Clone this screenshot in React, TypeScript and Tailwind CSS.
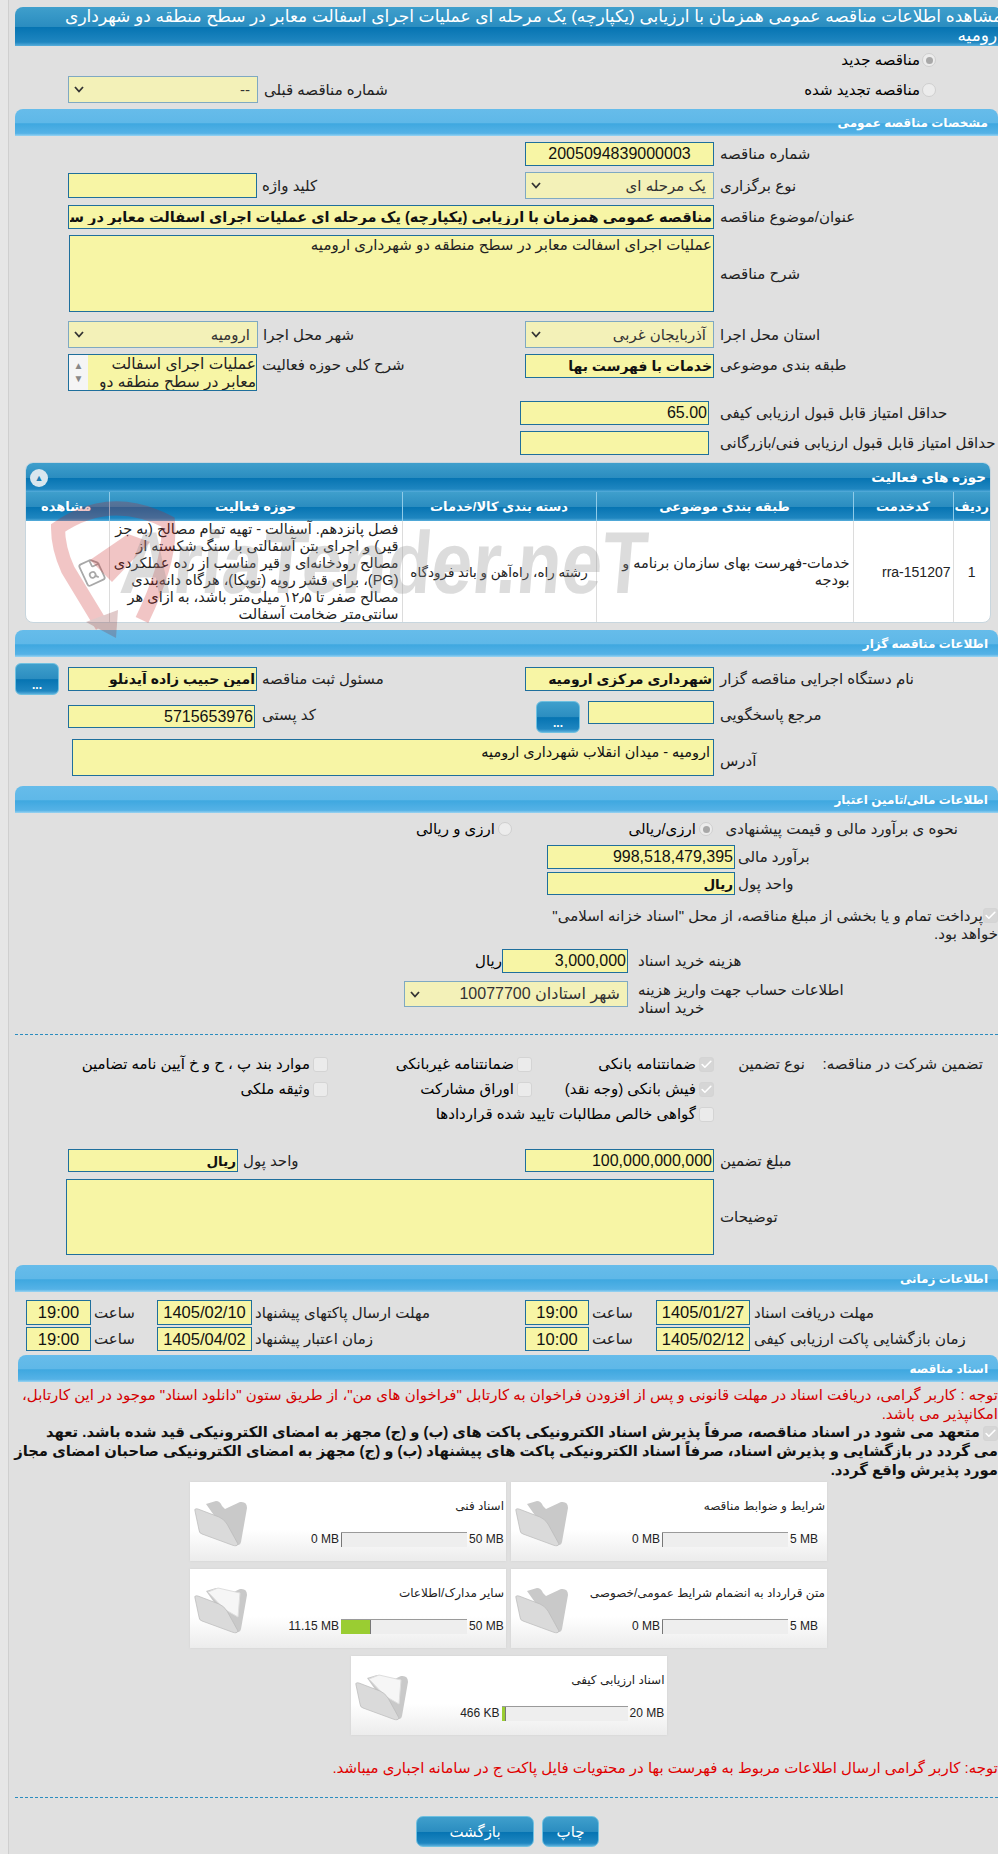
import { Check, FileSearch } from "lucide-react";
import type { ReactNode } from "react";

const darkBar =
  "bg-[linear-gradient(180deg,#3f9fcc_0%,#2b8dc0_50%,#0674b2_52%,#1f86c0_90%,#58aedb_100%)]";

function Section({ title, className = "" }: { title: string; className?: string }) {
  return (
    <div
      className={`flex h-[27px] items-center rounded-t-[8px] bg-[linear-gradient(180deg,#66bcea_0%,#5fb8e8_50%,#3fa8e0_55%,#55b2e6_90%,#9ad4f2_100%)] pr-[10px] text-[12px] font-bold text-white ${className}`}
    >
      {title}
    </div>
  );
}

function Label({ children, className = "" }: { children: ReactNode; className?: string }) {
  return <div className={`shrink-0 text-left text-[#222] ${className}`}>{children}</div>;
}

function Field({
  value = "",
  className = "",
  align = "text-right",
}: {
  value?: string;
  className?: string;
  align?: string;
}) {
  return (
    <input
      readOnly
      value={value}
      className={`shrink-0 border border-[#1f6f9c] bg-[#f7f5a5] px-[1px] text-[#111] outline-none ${align} ${className}`}
    />
  );
}

function Select({ value, className = "" }: { value: string; className?: string }) {
  return (
    <div
      className={`flex shrink-0 items-center justify-between border border-[#7fa9c2] bg-[#f3f1b8] pl-[5px] pr-[7px] text-[#333] ${className}`}
    >
      <span>{value}</span>
      <svg width="10" height="7" viewBox="0 0 10 7">
        <path d="M1 1 L5 5.5 L9 1" fill="none" stroke="#333" strokeWidth="1.8" />
      </svg>
    </div>
  );
}

function Radio({ checked = false }: { checked?: boolean }) {
  return (
    <span className="flex h-[14px] w-[14px] shrink-0 items-center justify-center rounded-full border border-[#cfcfcf] bg-[#ececec]">
      {checked && <span className="h-[7px] w-[7px] rounded-full bg-[#a8a8a8]" />}
    </span>
  );
}

function Tick({ checked = false, className = "" }: { checked?: boolean; className?: string }) {
  return (
    <span
      className={`flex h-[15px] w-[15px] shrink-0 items-center justify-center rounded-[3px] border border-[#d4d4d4] ${
        checked ? "bg-[#d6d6d6]" : "bg-[#ebebeb]"
      } ${className}`}
    >
      {checked && <Check className="h-[13px] w-[13px] text-white" strokeWidth={3} />}
    </span>
  );
}

function MoreButton() {
  return (
    <button
      className={`h-[32px] w-[44px] shrink-0 rounded-[6px] border border-[#6fc0e0] ${darkBar} pt-[12px] text-[12px] font-bold text-white`}
    >
      ...
    </button>
  );
}

function Folder({ open = false }: { open?: boolean }) {
  return (
    <svg width="54" height="47" viewBox="0 0 54 47" className="shrink-0">
      <path
        d="M12 4 L22 1 Q26 1 28 6 L31 9 L46 2 Q53 1 53 8 L47 42 Q46 46 41 45 Z"
        fill="#c9c9c9"
      />
      {open && <path d="M14 5 L24 1 L46 6 L44 30 L30 22 Z" fill="#f6f6f6" stroke="#dedede" />}
      <path
        d="M1 11 Q0 8 4 9 L25 17 Q30 19 33 24 L44 44 Q43 47 38 45 L8 34 Q5 33 5 30 Z"
        fill="#dadada"
        stroke="#b9b9b9"
        strokeWidth="0.7"
      />
    </svg>
  );
}

type Doc = { title: string; max: string; used: string; percent: number };

function DocCard({ doc }: { doc: Doc }) {
  const hasFiles = doc.percent > 0;
  return (
    <div className="flex h-[79px] w-[316px] items-start justify-between bg-[linear-gradient(180deg,#ffffff_0%,#ffffff_60%,#ececec_100%)] pr-[2px] pl-[4px] shadow-[0_0_2px_#cfcfcf]">
      <div className="min-w-0 flex-1">
        <div className="mt-[15px] pb-[8px] text-[12px] text-[#222]">{doc.title}</div>
        <div className="mt-[7px] flex items-center text-[12px] text-[#222]">
          <span dir="ltr" className="w-[35px] shrink-0 whitespace-nowrap text-left">{doc.max}</span>
          <div dir="ltr" className="mr-[2px] flex h-[15px] w-[126px] shrink-0 border-t border-[#9a9a9a] bg-[#eeeeee]">
            <div style={{ width: `${doc.percent}%` }} className="h-full bg-[#9acd32]" />
            <div className="h-full w-[1px] bg-[#777]" />
          </div>
          <span className="mr-[2px] whitespace-nowrap" dir="ltr">{doc.used}</span>
        </div>
      </div>
      <div className="mt-[18px]">
        <Folder open={hasFiles} />
      </div>
    </div>
  );
}

const docs: Doc[] = [
  { title: "شرایط و ضوابط مناقصه", max: "5 MB", used: "0 MB", percent: 0 },
  { title: "اسناد فنی", max: "50 MB", used: "0 MB", percent: 0 },
  { title: "متن قرارداد به انضمام شرایط عمومی/خصوصی", max: "5 MB", used: "0 MB", percent: 0 },
  { title: "سایر مدارک/اطلاعات", max: "50 MB", used: "11.15 MB", percent: 23 },
  { title: "اسناد ارزیابی کیفی", max: "20 MB", used: "466 KB", percent: 2.5 },
];

const columns = [
  { title: "ردیف", width: "w-[37px]" },
  { title: "کدخدمت", width: "w-[100px]" },
  { title: "طبقه بندی موضوعی", width: "w-[257px]" },
  { title: "دسته بندی کالا/خدمات", width: "w-[194px]" },
  { title: "حوزه فعالیت", width: "w-[293px]" },
  { title: "مشاهده", width: "w-[85px]" },
];

function Watermark() {
  return (
    <div className="pointer-events-none absolute left-[50px] top-[498px] flex h-[142px] w-[640px] items-start">
      <svg width="126" height="142" viewBox="0 0 126 142" className="shrink-0 opacity-25">
        <path
          d="M52 128 L18 72 Q8 50 8 30 Q60 -6 118 24 Q122 60 92 122"
          fill="none"
          stroke="#c81e1e"
          strokeWidth="14"
        />
        <path d="M40 62 L78 36 L100 44 L62 84 Z" fill="#c81e1e" />
        <path d="M36 124 L68 112 L66 140 Z" fill="#8a3030" />
      </svg>
      <div
        dir="ltr"
        className="mt-[20px] -ml-[55px] origin-left scale-x-[0.83] -skew-x-6 whitespace-nowrap font-['Liberation_Sans'] text-[88px] font-bold leading-[90px] text-[#8f8f8f] opacity-30"
      >
        AriaTender.neT
      </div>
    </div>
  );
}

export default function App() {
  return (
    <div
      dir="ltr"
      className="relative flex h-[1854px] w-[998px] overflow-hidden bg-[#e0e0e0] font-['Liberation_Sans','DejaVu_Sans',sans-serif] text-[15px] leading-[18px]"
    >
      <div className="w-[9px] shrink-0 border-r border-[#cfcfcf] bg-[#e6e6e6]" />
      <div dir="rtl" className="ml-[6px] w-[983px] shrink-0 pt-[7px]">
        <div
          className={`-mr-[4px] h-[39px] rounded-t-[8px] ${darkBar} pl-[43px] text-[17px] leading-[19px] text-white`}
        >
          مشاهده اطلاعات مناقصه عمومی همزمان با ارزیابی (یکپارچه) یک مرحله ای عملیات اجرای اسفالت معابر در سطح منطقه دو شهرداری ارومیه
        </div>

        <div className="mt-[7px] flex h-[14px] items-center gap-[2px] pr-[62px]">
          <Radio checked />
          <span>مناقصه جدید</span>
        </div>
        <div className="mt-[9px] flex h-[27px] items-center">
          <div className="flex w-[473px] items-center gap-[2px] pr-[62px]">
            <Radio />
            <span>مناقصه تجدید شده</span>
          </div>
          <Label className="w-[267px] pl-[6px]">شماره مناقصه قبلی</Label>
          <Select value="--" className="h-[27px] w-[190px]" />
        </div>

        <Section title="مشخصات مناقصه عمومی" className="mt-[6px]" />

        <div className="mt-[6px] flex h-[24px] items-center">
          <Label className="w-[284px] pl-[6px]">شماره مناقصه</Label>
          <Field value="2005094839000003" align="text-center" className="h-[24px] w-[189px] text-[16px]" />
        </div>
        <div className="mt-[6px] flex h-[27px] items-center">
          <Label className="w-[284px] pl-[6px]">نوع برگزاری</Label>
          <Select value="یک مرحله ای" className="h-[27px] w-[189px]" />
          <Label className="w-[268px] pl-[5px]">کلید واژه</Label>
          <Field className="h-[25px] w-[189px]" />
        </div>
        <div className="mt-[6px] flex h-[24px] items-center">
          <Label className="w-[284px] pl-[6px]">عنوان/موضوع مناقصه</Label>
          <Field
            value="مناقصه عمومی همزمان با ارزیابی (یکپارچه) یک مرحله ای عملیات اجرای اسفالت معابر در سطح منطقه دو شهرداری ارومیه"
            className="h-[24px] w-[646px] text-[14.5px] font-bold"
          />
        </div>
        <div className="mt-[6px] flex h-[77px] items-center">
          <Label className="w-[284px] pl-[6px]">شرح مناقصه</Label>
          <textarea
            readOnly
            value="عملیات اجرای اسفالت معابر در سطح منطقه دو شهرداری ارومیه"
            className="h-[77px] w-[645px] shrink-0 resize-none border border-[#1f6f9c] bg-[#f7f5a5] px-[1px] text-[15px] text-[#222] outline-none"
          />
        </div>
        <div className="mt-[9px] flex h-[27px] items-center">
          <Label className="w-[284px] pl-[6px]">استان محل اجرا</Label>
          <Select value="آذربایجان غربی" className="h-[27px] w-[189px]" />
          <Label className="w-[267px] pl-[5px]">شهر محل اجرا</Label>
          <Select value="ارومیه" className="h-[27px] w-[190px]" />
        </div>
        <div className="mt-[6px] flex h-[37px] items-start">
          <Label className="w-[284px] pl-[6px] pt-[2px]">طبقه بندی موضوعی</Label>
          <Field value="خدمات با فهرست بها" className="h-[24px] w-[189px] text-[14px] font-bold" />
          <Label className="w-[268px] pl-[5px] pt-[2px]">شرح کلی حوزه فعالیت</Label>
          <div className="flex h-[37px] w-[189px] shrink-0 overflow-hidden border border-[#1f6f9c] bg-[#f7f5a5]">
            <div className="flex-1 whitespace-nowrap text-[15.5px] leading-[18px] text-[#222]">
              عملیات اجرای اسفالت
              <br />
              معابر در سطح منطقه دو
            </div>
            <div className="flex w-[19px] shrink-0 flex-col items-center justify-between bg-[#f5f5f5] py-[6px] text-[10px] leading-[10px] text-[#888]">
              <span>▲</span>
              <span>▼</span>
            </div>
          </div>
        </div>
        <div className="mt-[10px] flex h-[24px] items-center">
          <Label className="w-[289px] pl-[11px]">حداقل امتیاز قابل قبول ارزیابی کیفی</Label>
          <Field value="65.00" className="h-[24px] w-[189px] text-[16px]" />
        </div>
        <div className="mt-[6px] flex h-[24px] items-center">
          <Label className="w-[289px] pl-[11px]">حداقل امتیاز قابل قبول ارزیابی فنی/بازرگانی</Label>
          <Field className="h-[24px] w-[189px]" />
        </div>

        <div className="ml-[10px] mr-[7px] mt-[7px] h-[161px] overflow-hidden rounded-[8px] border border-[#c8d6de] bg-white">
          <div className={`flex h-[29px] items-center justify-between ${darkBar} px-[4px] text-[13.5px] font-bold text-white`}>
            <span>حوزه های فعالیت</span>
            <span className="flex h-[18px] w-[18px] items-center justify-center rounded-full bg-[#d9e6ee] text-[9px] text-[#1f7fb5]">▲</span>
          </div>
          <table className="w-full table-fixed border-collapse">
            <thead>
              <tr className={`h-[29px] ${darkBar} text-[13px] text-white`}>
                {columns.map((col) => (
                  <th key={col.title} className={`${col.width} border-l border-[#8fcbe8] font-bold last:border-l-0`}>
                    {col.title}
                  </th>
                ))}
              </tr>
            </thead>
            <tbody>
              <tr className="h-[102px] text-[14.5px] leading-[17px] text-[#222]">
                <td className="border-l border-[#dcdcdc] text-center text-[14px]">1</td>
                <td className="border-l border-[#dcdcdc] px-[2px] text-right text-[14px]">rra-151207</td>
                <td className="border-l border-[#dcdcdc] px-[3px]">خدمات-فهرست بهای سازمان برنامه و بودجه</td>
                <td className="border-l border-[#dcdcdc] px-[2px] text-center text-[13.5px]">رشته راه، راه‌آهن و باند فرودگاه</td>
                <td className="border-l border-[#dcdcdc] px-[3px]">
                  فصل پانزدهم. آسفالت - تهیه تمام مصالح (به جز قیر) و اجرای بتن آسفالتی با سنگ شکسته از مصالح رودخانه‌ای و قیر مناسب از رده عملکردی (PG)، برای قشر رویه (توپکا)، هرگاه دانه‌بندی مصالح صفر تا ۱۲٫۵ میلی‌متر باشد، به ازای هر سانتی‌متر ضخامت آسفالت
                </td>
                <td>
                  <FileSearch className="mr-[3px] h-[28px] w-[28px] -rotate-[25deg] text-[#a8a8a8]" strokeWidth={1.5} />
                </td>
              </tr>
            </tbody>
          </table>
        </div>

        <Section title="اطلاعات مناقصه گزار" className="mt-[7px]" />

        <div className="mt-[6px] flex h-[32px] items-center">
          <Label className="w-[284px] pl-[6px]">نام دستگاه اجرایی مناقصه گزار</Label>
          <Field value="شهرداری مرکزی ارومیه" className="h-[24px] w-[189px] text-[14px] font-bold" />
          <Label className="w-[268px] pl-[5px]">مسئول ثبت مناقصه</Label>
          <Field value="امین حبیب زاده آیدنلو" className="h-[24px] w-[189px] text-[14px] font-bold" />
          <div className="mr-[9px]">
            <MoreButton />
          </div>
        </div>
        <div className="mt-[6px] flex h-[32px] items-start">
          <Label className="w-[284px] pl-[6px] pt-[5px]">مرجع پاسخگویی</Label>
          <Field className="h-[23px] w-[126px]" />
          <div className="mr-[8px] w-[55px] shrink-0">
            <MoreButton />
          </div>
          <Label className="w-[270px] pl-[7px] pt-[5px]">کد پستی</Label>
          <Field value="5715653976" className="mt-[4px] h-[23px] w-[187px] text-[16px]" />
        </div>
        <div className="mt-[6px] flex h-[37px] items-start">
          <Label className="w-[284px] pl-[6px] pt-[13px]">آدرس</Label>
          <Field value="ارومیه - میدان انقلاب شهرداری ارومیه" className="h-[37px] w-[642px] pb-[12px] pr-[3px] text-[14.5px]" />
        </div>

        <Section title="اطلاعات مالی/تامین اعتبار" className="mt-[10px]" />

        <div className="mt-[9px] flex h-[14px] items-center">
          <div className="w-[245px] shrink-0 whitespace-nowrap pr-[40px] text-[#222]">نحوه ی برآورد مالی و قیمت پیشنهادی</div>
          <div className="flex w-[241px] shrink-0 items-center gap-[3px] pr-[40px]">
            <Radio checked />
            <span>ارزی/ریالی</span>
          </div>
          <div className="flex items-center gap-[3px]">
            <Radio />
            <span>ارزی و ریالی</span>
          </div>
        </div>
        <div className="mt-[9px] flex h-[24px] items-center">
          <Label className="w-[263px] pl-[3px]">برآورد مالی</Label>
          <Field value="998,518,479,395" className="h-[24px] w-[188px] text-[16px]" />
        </div>
        <div className="mt-[3px] flex h-[23px] items-center">
          <Label className="w-[263px] pl-[3px]">واحد پول</Label>
          <Field value="ریال" className="h-[23px] w-[188px] text-[13.5px] font-bold" />
        </div>
        <div className="mt-[12px] flex h-[36px] items-start">
          <Tick checked className="mt-[1px]" />
          <div className="text-[#222]">
            پرداخت تمام و یا بخشی از مبلغ مناقصه، از محل "اسناد خزانه اسلامی"
            <br />
            <span className="-mr-[15px]">خواهد بود.</span>
          </div>
        </div>
        <div className="mt-[6px] flex h-[24px] items-center">
          <Label className="w-[370px] pl-[10px]">هزینه خرید اسناد</Label>
          <Field value="3,000,000" className="h-[24px] w-[126px] text-[16px]" />
          <span>ریال</span>
        </div>
        <div className="mt-[8px] flex h-[36px] items-start">
          <Label className="w-[370px] pl-[10px]">
            اطلاعات حساب جهت واریز هزینه
            <br />
            خرید اسناد
          </Label>
          <Select value="شهر استادان 10077700" className="h-[26px] w-[224px] pr-[5px] pl-[5px] text-[16px]" />
        </div>
        <div className="mt-[17px] border-t border-dashed border-[#2b8cbf]" />

        <div className="mt-[19px] flex h-[20px] items-center">
          <div className="mr-[15px] w-[178px] shrink-0 text-[#222]">تضمین شرکت در مناقصه:</div>
          <div className="w-[91px] shrink-0 text-[#222]">نوع تضمین</div>
          <div className="flex w-[182px] shrink-0 items-center gap-[3px]">
            <Tick checked />
            <span>ضمانتنامه بانکی</span>
          </div>
          <div className="flex w-[204px] shrink-0 items-center gap-[3px]">
            <Tick />
            <span>ضمانتنامه غیربانکی</span>
          </div>
          <div className="flex items-center gap-[3px]">
            <Tick />
            <span>موارد بند پ ، ح و خ آیین نامه تضامین</span>
          </div>
        </div>
        <div className="mt-[5px] flex h-[20px] items-center pr-[284px]">
          <div className="flex w-[182px] shrink-0 items-center gap-[3px]">
            <Tick checked />
            <span>فیش بانکی (وجه نقد)</span>
          </div>
          <div className="flex w-[204px] shrink-0 items-center gap-[3px]">
            <Tick />
            <span>اوراق مشارکت</span>
          </div>
          <div className="flex items-center gap-[3px]">
            <Tick />
            <span>وثیقه ملکی</span>
          </div>
        </div>
        <div className="mt-[5px] flex h-[20px] items-center gap-[3px] pr-[284px]">
          <Tick />
          <span>گواهی خالص مطالبات تایید شده قراردادها</span>
        </div>

        <div className="mt-[25px] flex h-[23px] items-center">
          <Label className="w-[284px] pl-[6px]">مبلغ تضمین</Label>
          <Field value="100,000,000,000" className="h-[23px] w-[189px] text-[16px]" />
          <Label className="w-[287px] pl-[5px]">واحد پول</Label>
          <Field value="ریال" className="h-[23px] w-[170px] text-[13.5px] font-bold" />
        </div>
        <div className="mt-[7px] flex h-[76px] items-center">
          <Label className="w-[284px] pl-[6px]">توضیحات</Label>
          <textarea
            readOnly
            className="h-[76px] w-[648px] shrink-0 resize-none border border-[#1f6f9c] bg-[#f7f5a5] outline-none"
          />
        </div>

        <Section title="اطلاعات زمانی" className="mt-[10px]" />

        <div className="mt-[8px] flex h-[25px] items-center">
          <Label className="w-[248px] pl-[4px]">مهلت دریافت اسناد</Label>
          <Field value="1405/01/27" align="text-center" className="h-[25px] w-[94px] text-[16.5px]" />
          <Label className="w-[67px] pl-[3px]">ساعت</Label>
          <Field value="19:00" align="text-center" className="h-[25px] w-[64px] text-[16.5px]" />
          <Label className="w-[273px] pl-[3px]">مهلت ارسال پاکتهای پیشنهاد</Label>
          <Field value="1405/02/10" align="text-center" className="h-[25px] w-[95px] text-[16.5px]" />
          <Label className="w-[66px] pl-[3px]">ساعت</Label>
          <Field value="19:00" align="text-center" className="h-[25px] w-[65px] text-[16.5px]" />
        </div>
        <div className="mt-[2px] flex h-[24px] items-center">
          <Label className="w-[248px] pl-[4px]">زمان بازگشایی پاکت ارزیابی کیفی</Label>
          <Field value="1405/02/12" align="text-center" className="h-[24px] w-[94px] text-[16.5px]" />
          <Label className="w-[67px] pl-[3px]">ساعت</Label>
          <Field value="10:00" align="text-center" className="h-[24px] w-[64px] text-[16.5px]" />
          <Label className="w-[273px] pl-[3px]">زمان اعتبار پیشنهاد</Label>
          <Field value="1405/04/02" align="text-center" className="h-[24px] w-[95px] text-[16.5px]" />
          <Label className="w-[66px] pl-[3px]">ساعت</Label>
          <Field value="19:00" align="text-center" className="h-[24px] w-[65px] text-[16.5px]" />
        </div>

        <Section title="اسناد مناقصه" className="ml-[3px] mt-[4px]" />

        <div className="mt-[3px] text-[15px] leading-[19px] text-[#d40000]">
          توجه : کاربر گرامی، دریافت اسناد در مهلت قانونی و پس از افزودن فراخوان به کارتابل "فراخوان های من"، از طریق ستون "دانلود اسناد" موجود در این کارتابل، امکانپذیر می باشد.
        </div>
        <div className="h-[59px] whitespace-nowrap text-[14.8px] font-bold leading-[19px] text-[#111]">
          <Tick checked className="ml-[3px] inline-flex align-middle" />
          متعهد می شود در اسناد مناقصه، صرفاً پذیرش اسناد الکترونیکی پاکت های (ب) و (ج) مجهز به امضای الکترونیکی قید شده باشد. تعهد
          <br />
          می گردد در بازگشایی و پذیرش اسناد، صرفاً اسناد الکترونیکی پاکت های پیشنهاد (ب) و (ج) مجهز به امضای الکترونیکی صاحبان امضای مجاز
          <br />
          مورد پذیرش واقع گردد.
        </div>

        <div className="flex justify-center gap-[5px] pl-[4px]">
          <DocCard doc={docs[0]} />
          <DocCard doc={docs[1]} />
        </div>
        <div className="mt-[8px] flex justify-center gap-[5px] pl-[4px]">
          <DocCard doc={docs[2]} />
          <DocCard doc={docs[3]} />
        </div>
        <div className="mt-[8px] flex justify-center pl-[4px]">
          <DocCard doc={docs[4]} />
        </div>

        <div className="mt-[24px] h-[18px] text-[15px] text-[#e00000]">
          توجه: کاربر گرامی ارسال اطلاعات مربوط به فهرست بها در محتویات فایل پاکت ج در سامانه اجباری میباشد.
        </div>
        <div className="mt-[20px] border-t border-dashed border-[#2b8cbf]" />

        <div className="mt-[18px] flex justify-center gap-[8px] pl-[2px]">
          <button className={`h-[31px] w-[57px] rounded-[7px] border border-[#6fc0e0] ${darkBar} text-[15px] text-white`}>چاپ</button>
          <button className={`h-[31px] w-[118px] rounded-[7px] border border-[#6fc0e0] ${darkBar} text-[15px] text-white`}>بازگشت</button>
        </div>
      </div>
      <Watermark />
    </div>
  );
}
